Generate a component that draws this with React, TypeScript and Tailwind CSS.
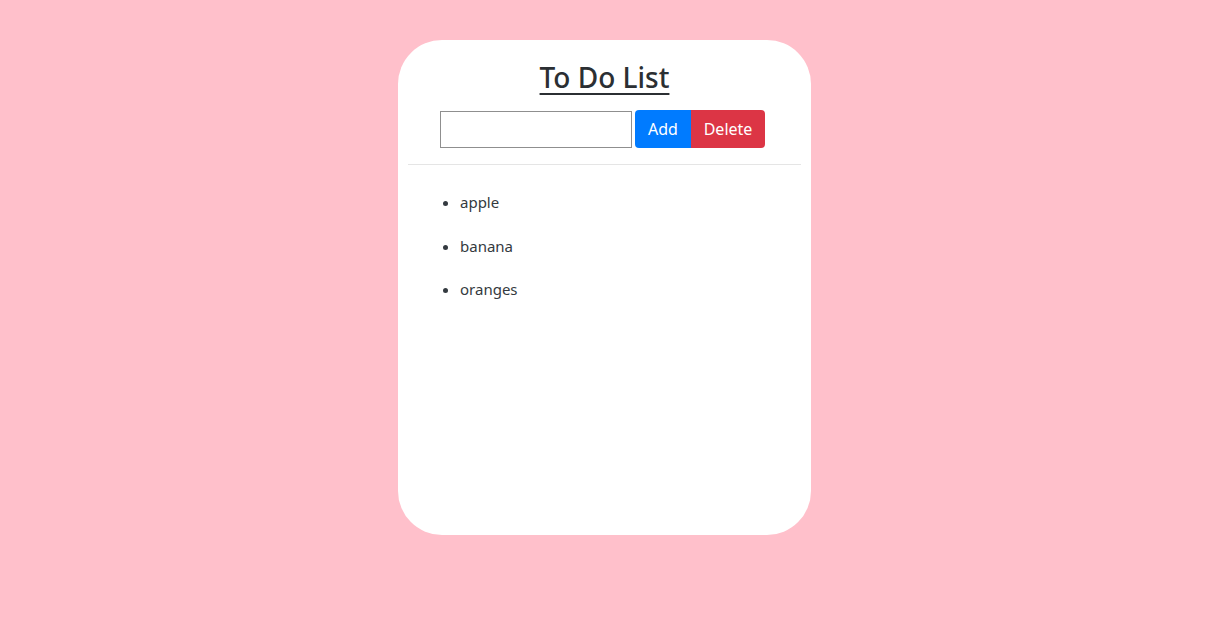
export default function App() {
	const items = ["apple", "banana", "oranges"];
	return (
		<div className="min-h-screen bg-[#ffc0cb] pt-[40px] pr-[8px] flex justify-center" style={{ fontFamily: '"Noto Sans", "Open Sans", sans-serif' }}>
			<div className="w-[413px] h-[495px] rounded-[44px] bg-white px-[10px] pt-[17px]">
				<h1 className="text-center text-[28px] leading-[40px] font-medium text-[#2b2f33] underline underline-offset-[5px] decoration-2">To Do List</h1>
				<div className="flex justify-center items-center mt-[13px] pr-[4px]">
					<input type="text" className="w-[192px] h-[37px] border border-[#8f8f8f] mr-[3px] outline-none" />
					<button className="h-[38px] w-[56px] bg-[#007bff] text-white text-[16px] rounded-l-[4px]">Add</button>
					<button className="h-[38px] w-[74px] bg-[#dc3545] text-white text-[16px] rounded-r-[4px]">Delete</button>
				</div>
				<hr className="mt-[16px] border-t border-[#e5e5e5]" />
				<ul className="list-disc pl-[52px] mt-[25px] text-[15px] text-[#343a40]">
					{items.map((item) => (
						<li key={item} className="leading-[24px] mb-[19.5px]">
							{item}
						</li>
					))}
				</ul>
			</div>
		</div>
	);
}
